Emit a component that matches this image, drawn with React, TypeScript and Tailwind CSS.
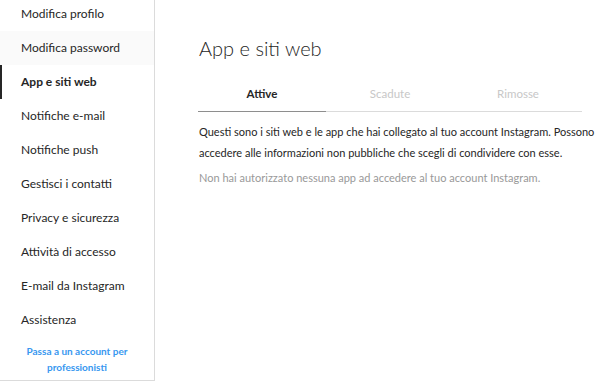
import React from 'react';

const MENU = [
  'Modifica profilo',
  'Modifica password',
  'App e siti web',
  'Notifiche e-mail',
  'Notifiche push',
  'Gestisci i contatti',
  'Privacy e sicurezza',
  'Attività di accesso',
  'E-mail da Instagram',
  'Assistenza',
];

export default function App() {
  const active = 'App e siti web';
  const hovered = 'Modifica password';

  return (
    <div className="w-[610px] h-[382px] bg-white flex text-[#262626] overflow-hidden" style={{ fontFamily: 'Lato, "Noto Sans", sans-serif' }}>
      {/* sidebar */}
      <div className="w-[155px] h-[381px] shrink-0 border-r border-b border-[#dbdbdb] flex flex-col">
        <div className="-mt-[3px]">
          {MENU.map((item) => (
            <div
              key={item}
              className={`h-[34px] flex items-center pl-[19px] text-[12px] border-l-2 ${
                item === active
                  ? 'border-[#262626] font-bold'
                  : item === hovered
                  ? 'border-transparent bg-[#fafafa]'
                  : 'border-transparent'
              }`}
            >
              {item}
            </div>
          ))}
        </div>
        <div className="mt-[6px] text-center text-[10px] font-bold text-[#3897f0] leading-[16px]">
          Passa a un account per
          <br />
          professionisti
        </div>
      </div>

      {/* main */}
      <div className="flex-1 pl-[43px] pr-[10px] pt-[35px]">
        <h1 className="text-[20px] font-light leading-[26px] pl-[1px]">App e siti web</h1>
        <div className="mt-[24px] grid grid-cols-3 border-b border-[#dbdbdb] w-[384px]">
          <div className="text-center text-[11.5px] font-bold pb-[9px] border-b border-[#8e8e8e] -mb-px">Attive</div>
          <div className="text-center text-[11.5px] text-[#c7c7c7] pb-[9px]">Scadute</div>
          <div className="text-center text-[11.5px] text-[#c7c7c7] pb-[9px]">Rimosse</div>
        </div>
        <p className="mt-[9px] text-[11px] leading-[21px] whitespace-nowrap pl-[1px]">
          Questi sono i siti web e le app che hai collegato al tuo account Instagram. Possono
          <br />
          accedere alle informazioni non pubbliche che scegli di condividere con esse.
        </p>
        <p className="mt-[4px] text-[11px] leading-[21px] text-[#999999] pl-[1px]">
          Non hai autorizzato nessuna app ad accedere al tuo account Instagram.
        </p>
      </div>
    </div>
  );
}
